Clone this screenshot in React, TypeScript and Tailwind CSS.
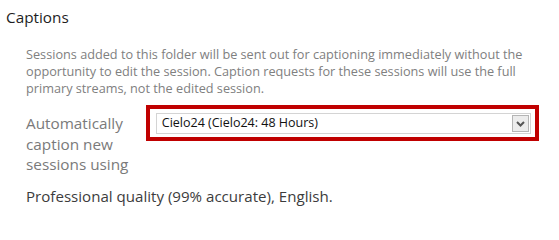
export default function App() {
  return (
    <div
      className="w-[559px] h-[215px] bg-white overflow-hidden"
      style={{ fontFamily: '"Open Sans", "Noto Sans", sans-serif' }}
    >
      <div className="pl-[6px] pt-[6px]">
        <h2 className="text-[15.3px] leading-[22px] text-[#1e1e1e]">Captions</h2>
      </div>

      <div className="pl-[26px] pr-[20px] mt-[18px]">
        {/* description */}
        <p className="text-[12.7px] leading-[17px] text-[#808080] whitespace-nowrap">
          Sessions added to this folder will be sent out for captioning immediately without the
          <br />
          opportunity to edit the session. Caption requests for these sessions will use the full
          <br />
          primary streams, not the edited session.
        </p>

        {/* provider row */}
        <div className="flex items-start mt-[8px]">
          <div className="w-[121px] pt-[8px] text-[15.3px] leading-[20.5px] text-[#7a7a7a]">
            Automatically caption new sessions using
          </div>
          <div className="w-[397px] h-[36px] border-[4px] border-[#c00000] pl-[6px] pr-[4px] pt-[4px]">
            <div className="flex items-center h-[21px] border border-[#d4d4d4] bg-white pl-[5px] pr-[1px]">
              <span className="flex-1 text-[12.5px] text-[#111] whitespace-nowrap">
                Cielo24 (Cielo24: 48 Hours)
              </span>
              <div className="w-[17px] h-[17px] border border-[#b5b5b5] bg-[#ececec] flex items-center justify-center">
                <svg width="9" height="6" viewBox="0 0 9 6">
                  <path d="M1 1 L4.5 4.5 L8 1" stroke="#555" strokeWidth="2" fill="none" />
                </svg>
              </div>
            </div>
          </div>
        </div>

        <p className="mt-[11px] text-[15.1px] leading-[20px] text-[#3c3c3c]">
          Professional quality (99% accurate), English.
        </p>
      </div>
    </div>
  );
}
